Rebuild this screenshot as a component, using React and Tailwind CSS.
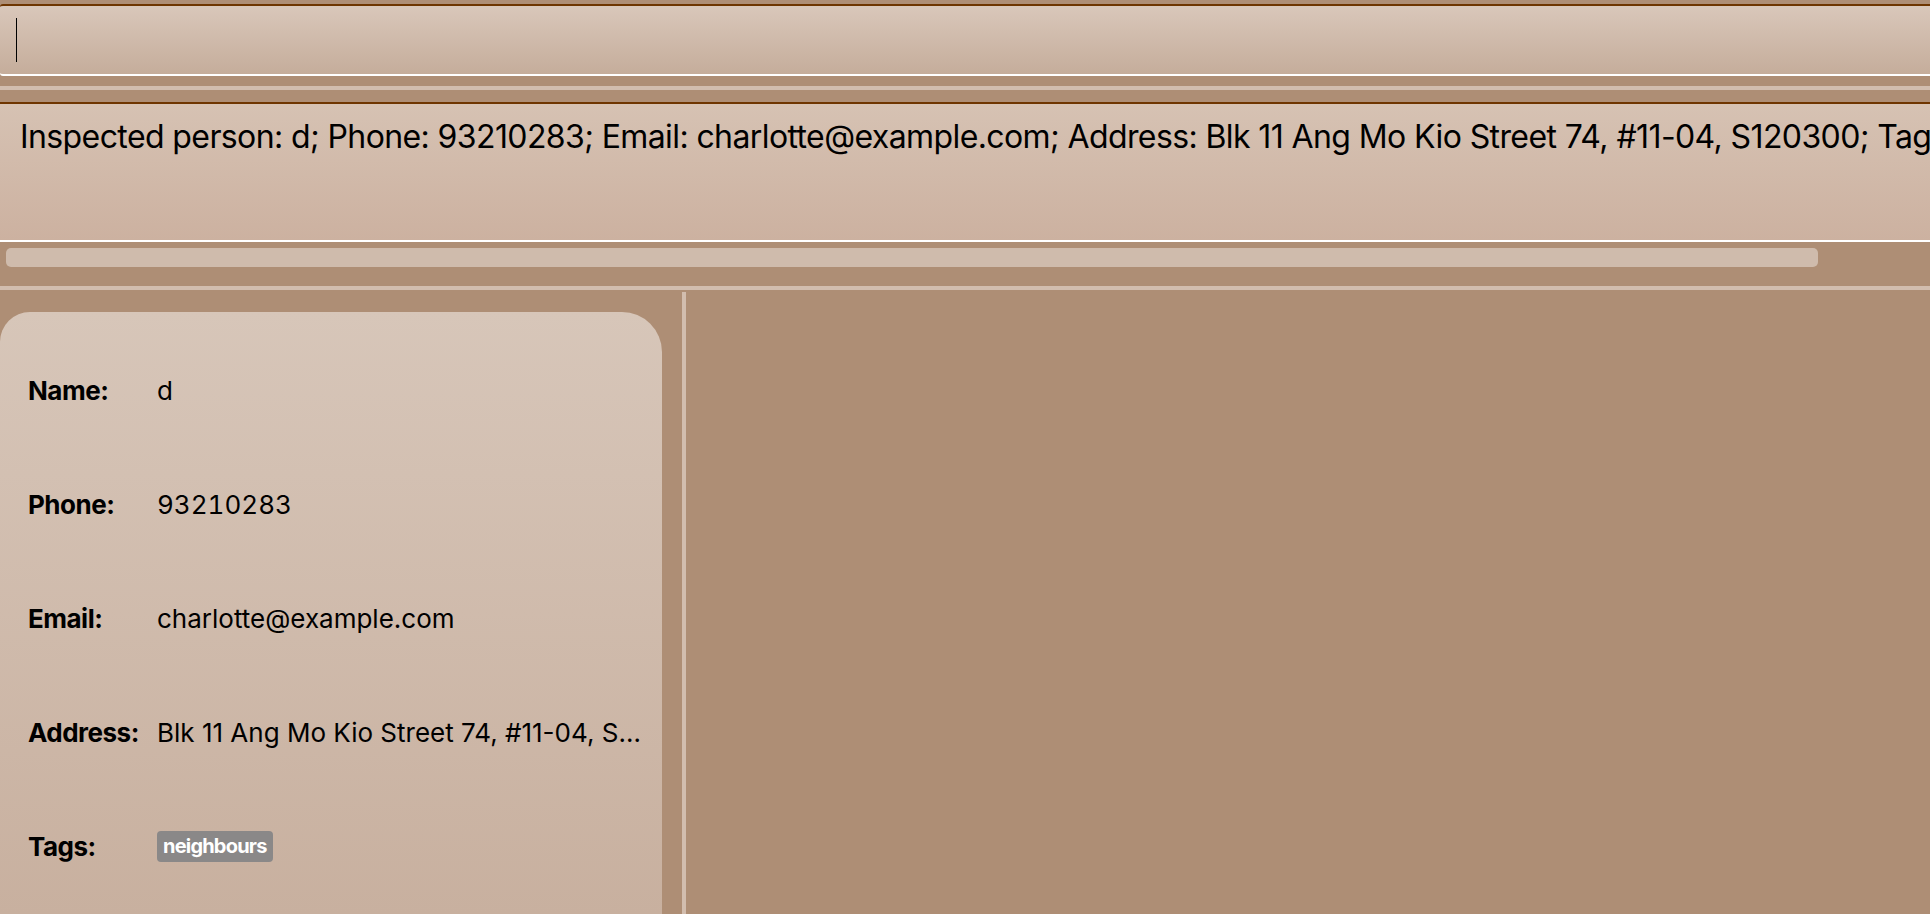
import React from 'react';

// --- DATA ---
const person = {
  name: 'd',
  phone: '93210283',
  email: 'charlotte@example.com',
  address: 'Blk 11 Ang Mo Kio Street 74, #11-04, S120300',
  tags: ['neighbours'],
};

const resultText = `Inspected person: ${person.name}; Phone: ${person.phone}; Email: ${person.email}; Address: ${person.address}; Tags: [${person.tags.join(', ')}]`;

// --- SUB-COMPONENTS ---

const CommandBox = () => (
  <div className="pt-[4px]">
    <div className="h-[72px] rounded-l-[3px] border-t-2 border-t-[#6e3500] border-b-2 border-b-white bg-linear-to-b from-[#d9c7ba] to-[#c5ad9b] flex items-center pl-[16px]">
      <div className="w-px h-[44px] bg-black" />
    </div>
  </div>
);

const ResultBox = () => (
  <div className="h-[140px] border-t-2 border-t-[#6e3500] border-b-2 border-b-white bg-linear-to-b from-[#d6c2b3] to-[#ccb1a0] pl-[20px] pt-[14px] overflow-hidden">
    <p className="text-[32px] leading-[38px] tracking-[-0.6px] text-black whitespace-nowrap">{resultText}</p>
  </div>
);

const ScrollBar = () => (
  <div className="h-[44px] pt-[6px] pl-[6px]">
    <div className="w-[1812px] h-[19px] rounded-[5px] bg-[#cfbbac]" />
  </div>
);

const Row = ({ label, numeric = false, children }) => (
  <div className="h-[114px] flex items-center">
    <div className="w-[157px] shrink-0 pl-[28px] text-[26px] font-bold tracking-[-0.5px] text-black">{label}</div>
    <div className={`flex-1 min-w-0 pr-[16px] text-[26px] text-black truncate ${numeric ? 'tabular-nums' : ''}`}>
      {children}
    </div>
  </div>
);

const PersonCard = () => (
  <div className="w-[662px] h-[602px] rounded-tl-[30px] rounded-tr-[40px] bg-linear-to-b from-[#d7c6b9] to-[#c8b09f] pt-[21px]">
    <Row label="Name:">{person.name}</Row>
    <Row label="Phone:" numeric>{person.phone}</Row>
    <Row label="Email:">{person.email}</Row>
    <Row label="Address:">{person.address}</Row>
    <Row label="Tags:">
      <div className="flex gap-2">
        {person.tags.map((tag) => (
          <span key={tag} className="h-[31px] px-[6px] rounded-[4px] bg-[#8a8888] text-white text-[20px] font-bold tracking-[-0.8px] leading-[31px]">
            {tag}
          </span>
        ))}
      </div>
    </Row>
  </div>
);

// --- MAIN ---

export default function App() {
  return (
    <div className="w-[1930px] h-[914px] overflow-hidden bg-[#ae8e75] font-['Inter',sans-serif]">
      <CommandBox />
      <div className="mt-[10px] h-[4px] bg-[#d2bdae]" />
      <div className="mt-[12px]">
        <ResultBox />
      </div>
      <ScrollBar />
      <div className="h-[4px] bg-[#d2bdae]" />
      <div className="flex">
        <div className="w-[682px] shrink-0 pt-[22px]">
          <PersonCard />
        </div>
        <div className="w-[4px] mt-[2px] h-[622px] bg-[#d2bdae]" />
      </div>
    </div>
  );
}
